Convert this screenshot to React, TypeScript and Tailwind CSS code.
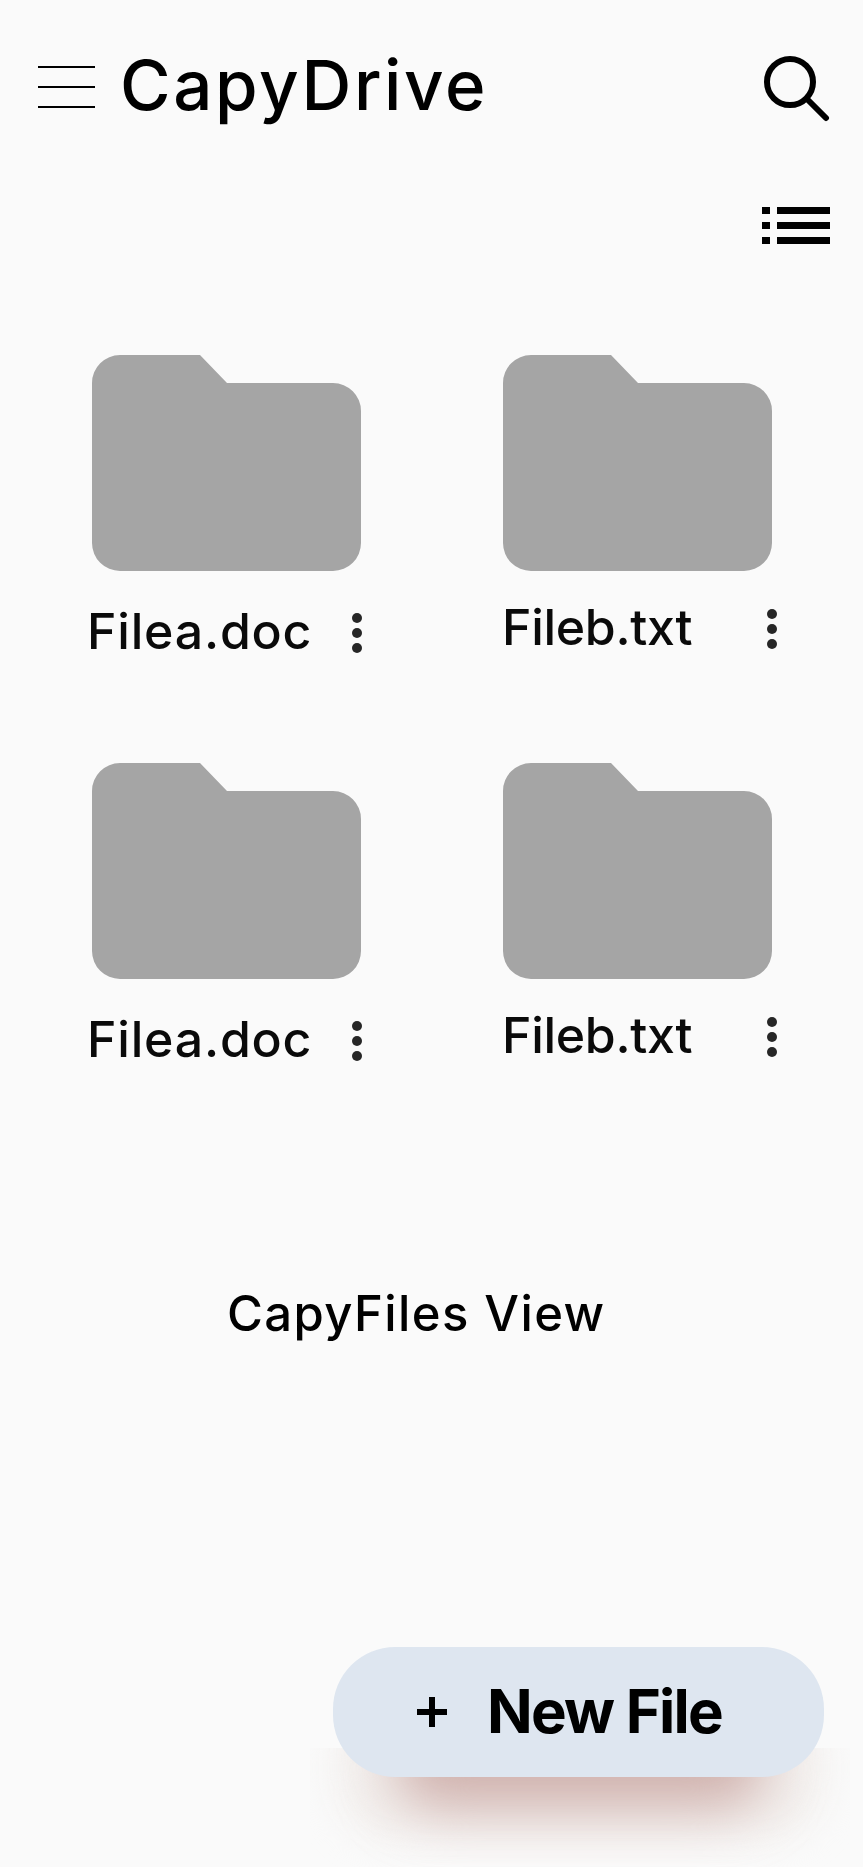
const files = ["Filea.doc", "Fileb.txt", "Filea.doc", "Fileb.txt"];

function Folder() {
  return (
    <svg width="269" height="216" viewBox="0 0 269 216" className="block">
      <path
        d="M28 0H108L135 28H241A28 28 0 0 1 269 56V188A28 28 0 0 1 241 216H28A28 28 0 0 1 0 188V28A28 28 0 0 1 28 0Z"
        fill="#a5a5a5"
      />
    </svg>
  );
}

function Dots() {
  return (
    <div className="flex flex-col gap-[5px]">
      <span className="size-[10px] rounded-full bg-[#262626]" />
      <span className="size-[10px] rounded-full bg-[#262626]" />
      <span className="size-[10px] rounded-full bg-[#262626]" />
    </div>
  );
}

function FileCard({ name, even }: { name: string; even: boolean }) {
  return (
    <div className="w-[269px]">
      <Folder />
      <div className={even ? "mt-[31px] -ml-[1px] flex h-[50px] items-center justify-between" : "mt-[35px] -ml-[5px] flex h-[50px] items-center justify-between"}>
        <span className={even ? "text-[50px] font-medium leading-[50px] tracking-[-0.3px] text-[#0a0a0a]" : "text-[50px] font-medium leading-[50px] tracking-[0.8px] text-[#0a0a0a]"}>{name}</span>
        <span className={even ? "-mr-[5px] mt-[4px]" : "-mr-[1px] mt-[3px]"}>
          <Dots />
        </span>
      </div>
    </div>
  );
}

export default function App() {
  return (
    <div className="relative h-[1867px] w-[863px] overflow-hidden bg-[#fafafa] font-['Inter',sans-serif] text-black">
      <header className="flex items-center justify-between pl-[38px] pr-[33px] pt-[50px]">
        <div className="flex items-center gap-[25px]">
          <div className="mt-[2px] flex w-[57px] flex-col gap-[18px]">
            <span className="h-[2px] bg-black" />
            <span className="h-[2px] bg-black" />
            <span className="h-[2px] bg-black" />
          </div>
          <h1 className="-mt-[3px] text-[69px] font-medium leading-[70px] tracking-[2.6px]">CapyDrive</h1>
        </div>
        <svg width="68" height="68" viewBox="0 0 68 68" fill="none" stroke="black" strokeWidth="6" strokeLinecap="round" className="mt-[4px]">
          <circle cx="28" cy="28" r="23" />
          <path d="M45 45L64 64" />
        </svg>
      </header>

      <div className="mt-[85px] flex justify-end pr-[33px]">
        <div className="flex flex-col gap-[8px]">
          {[0, 1, 2].map((i) => (
            <div key={i} className="flex gap-[7px]">
              <span className="h-[7px] w-[8px] bg-black" />
              <span className="h-[7px] w-[53px] bg-black" />
            </div>
          ))}
        </div>
      </div>

      <div className="mt-[111px] grid grid-cols-[269px_269px] gap-x-[142px] gap-y-[107px] pl-[92px]">
        {files.map((name, i) => (
          <FileCard key={i} name={name} even={i % 2 === 1} />
        ))}
      </div>

      <p className="mt-[222px] pl-[227px] text-[49px] font-medium leading-[56px] tracking-[1.4px]">CapyFiles View</p>

      {/* shadow is cut off flat at the top in the design */}
      <div className="absolute left-[310px] top-[1748px] h-[119px] w-[540px] overflow-hidden">
        <div className="absolute left-[25px] top-[-50px] h-[140px] w-[490px] rounded-[60px] bg-[#f3f0ee] blur-[18px]" />
        <div className="absolute left-[85px] top-[-40px] h-[100px] w-[370px] rounded-[40px] bg-[#cfb0ac] blur-[28px]" />
      </div>

      <button className="absolute left-[333px] top-[1647px] flex h-[130px] w-[491px] items-center rounded-[62px] bg-[#dee6f0] pl-[84px]">
        <svg width="30" height="30" viewBox="0 0 30 30" fill="black">
          <rect x="12" y="0" width="6" height="30" />
          <rect x="0" y="12" width="30" height="6" />
        </svg>
        <span className="-mt-[3px] ml-[40px] text-[60px] font-bold leading-[70px] tracking-[-1.8px]">New File</span>
      </button>
    </div>
  );
}
